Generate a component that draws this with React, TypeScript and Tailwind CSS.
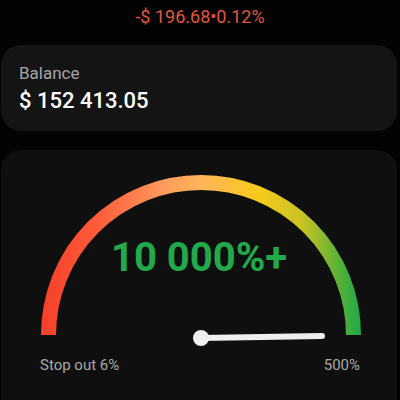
import React from "react";

const font = { fontFamily: "Roboto, 'Noto Sans', sans-serif" };

const Gauge = () => (
  <svg width="400" height="200" viewBox="0 0 400 200" className="block">
    <defs>
      <linearGradient id="arc" x1="40" y1="0" x2="360" y2="0" gradientUnits="userSpaceOnUse">
        <stop offset="0" stopColor="#f43f2a" />
        <stop offset="0.18" stopColor="#ff5d3a" />
        <stop offset="0.38" stopColor="#ff9a5c" />
        <stop offset="0.5" stopColor="#ffb45a" />
        <stop offset="0.68" stopColor="#f7cb1c" />
        <stop offset="0.82" stopColor="#c7c224" />
        <stop offset="0.92" stopColor="#62b334" />
        <stop offset="1" stopColor="#1ea848" />
      </linearGradient>
    </defs>
    <path
      d="M 47.5 185 A 152.5 152.5 0 0 1 352.5 185"
      fill="none"
      stroke="url(#arc)"
      strokeWidth="15"
      strokeLinecap="butt"
    />
    <line x1="200" y1="188" x2="321" y2="186" stroke="#efefef" strokeWidth="6" strokeLinecap="round" />
    <circle cx="200" cy="188" r="8" fill="#efefef" />
  </svg>
);

export default function App() {
  return (
    <div className="w-[400px] h-[400px] overflow-hidden bg-[#030303]" style={font}>
      <div className="h-[45px] pt-[4px] text-center text-[18px] leading-[26px] text-[#e2553f]">
        -$ 196.68•0.12%
      </div>
      <div className="ml-[1px] w-[396px] h-[86px] rounded-[20px] bg-[#141414] pl-[18px] pt-[17px]">
        <div className="text-[17px] leading-[22px] text-[#a6a6a6]">Balance</div>
        <div className="mt-[3px] text-[22px] leading-[28px] font-medium text-white">$ 152 413.05</div>
      </div>
      <div className="mt-[19px] ml-[1px] w-[396px] h-[300px] rounded-t-[20px] bg-[#0f0f0f]">
        <div className="relative">
          <Gauge />
          <div className="absolute left-0 right-0 top-[83px] text-center text-[40px] leading-[50px] font-bold text-[#22a94a]">
            10 000%+
          </div>
        </div>
        <div className="mt-[5px] flex justify-between pl-[39px] pr-[37px] text-[15px] leading-[20px] text-[#a8a8a8]">
          <span>Stop out 6%</span>
          <span>500%</span>
        </div>
      </div>
    </div>
  );
}
